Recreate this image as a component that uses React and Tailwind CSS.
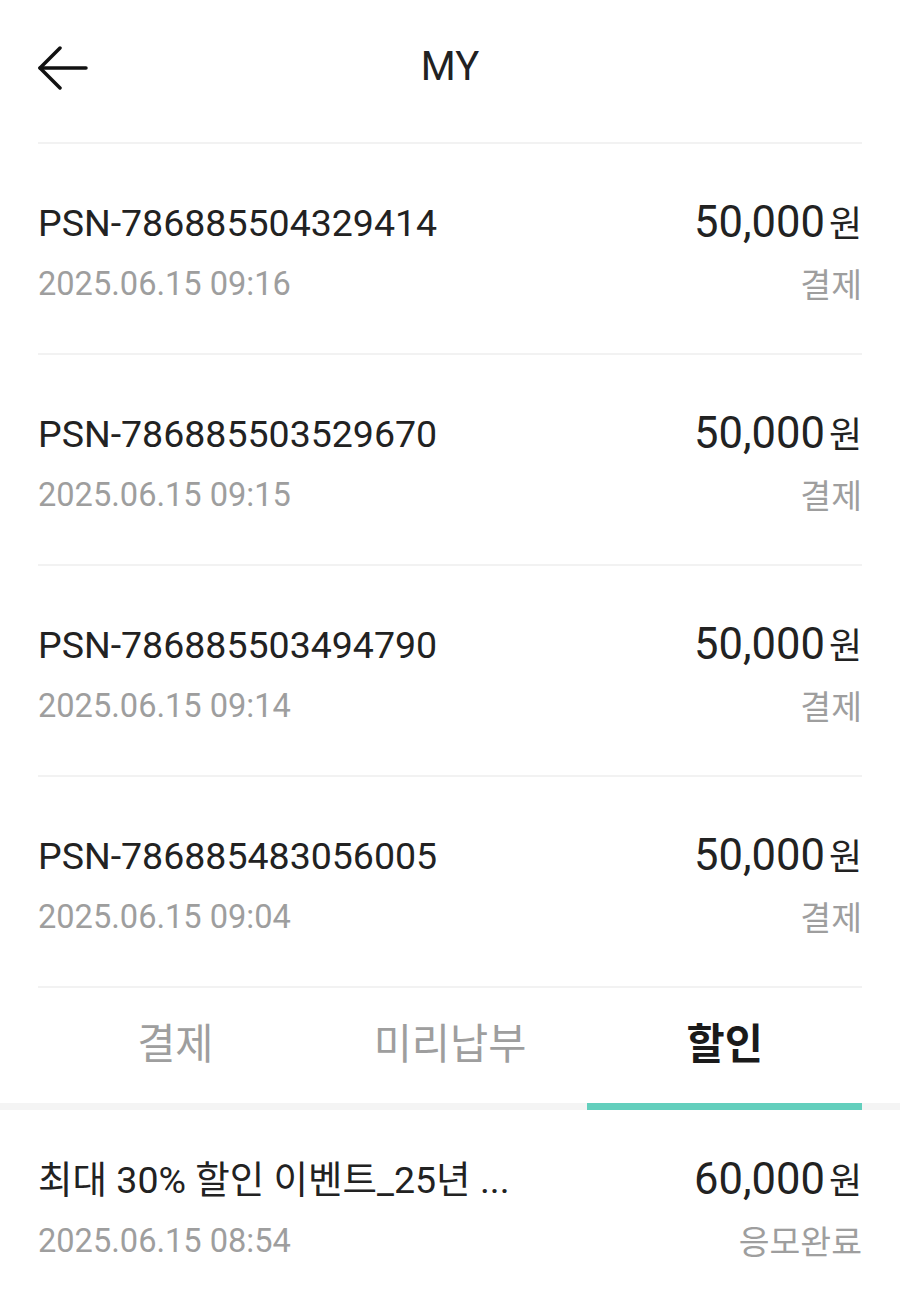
const rows = [
  { id: "PSN-786885504329414", date: "2025.06.15 09:16", amount: "50,000", status: "결제" },
  { id: "PSN-786885503529670", date: "2025.06.15 09:15", amount: "50,000", status: "결제" },
  { id: "PSN-786885503494790", date: "2025.06.15 09:14", amount: "50,000", status: "결제" },
  { id: "PSN-786885483056005", date: "2025.06.15 09:04", amount: "50,000", status: "결제" },
];

const tabs = ["결제", "미리납부", "할인"];

function Row({ title, date, amount, status, className }) {
  return (
    <div className={`flex items-start justify-between ${className}`}>
      <div className="flex flex-col gap-[20px] min-w-0">
        <div className="text-[37.5px] leading-[42px] text-[#222222] truncate">{title}</div>
        <div className="text-[32.6px] leading-[40px] text-[#9e9e9e]">{date}</div>
      </div>
      <div className="flex flex-col items-end gap-[20px] shrink-0">
        <div className="flex items-baseline leading-[42px] text-[#222222]">
          <span className="text-[43.5px]">{amount}</span>
          <span className="text-[36px] ml-[4px]">원</span>
        </div>
        <div className="text-[33.5px] leading-[40px] text-[#9e9e9e]">{status}</div>
      </div>
    </div>
  );
}

export default function App() {
  return (
    <div
      className="w-[900px] min-h-[1300px] bg-white"
      style={{ fontFamily: "Roboto, 'Noto Sans CJK KR', sans-serif" }}
    >
      <div className="px-[38px]">
        <header className="relative flex items-center justify-center h-[144px] border-b-2 border-[#f2f2f2]">
          <svg
            className="absolute left-0 top-[46px]"
            width="50"
            height="44"
            viewBox="0 0 50 44"
            fill="none"
            stroke="#111"
            strokeWidth="3.5"
            strokeLinecap="round"
            strokeLinejoin="round"
          >
            <path d="M48 22H2" />
            <path d="M22 2L2 22l20 20" />
          </svg>
          <h1 className="text-[40px] leading-none text-[#222222] -mt-[8px]">MY</h1>
        </header>

        {rows.map((r) => (
          <Row
            key={r.id}
            title={r.id}
            date={r.date}
            amount={r.amount}
            status={r.status}
            className="pt-[58px] pb-[47px] border-b-2 border-[#f2f2f2]"
          />
        ))}

        <div className="grid grid-cols-3 h-[115px] items-center">
          {tabs.map((t, i) => (
            <div
              key={t}
              className={`text-center text-[41.5px] ${
                i === 2 ? "font-bold text-[#1a1a1a]" : "text-[#9e9e9e]"
              }`}
            >
              {t}
            </div>
          ))}
        </div>
      </div>

      <div className="h-[7px] bg-[#f4f4f4] px-[38px] grid grid-cols-3">
        <div className="col-start-3 bg-[#63cfbd]" />
      </div>

      <div className="px-[38px]">
        <Row
          title="최대 30% 할인 이벤트_25년 ..."
          date="2025.06.15 08:54"
          amount="60,000"
          status="응모완료"
          className="pt-[49px]"
        />
      </div>
    </div>
  );
}
